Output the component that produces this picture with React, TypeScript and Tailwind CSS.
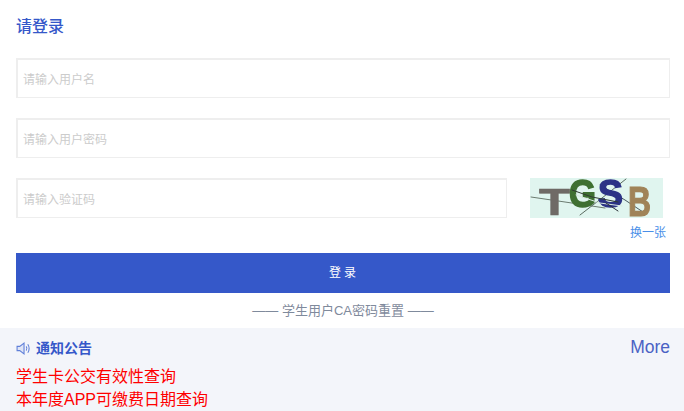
export default function App() {
  return (
    <div className="w-[684px] h-[411px] overflow-hidden bg-white flex flex-col font-['Liberation_Sans','Noto_Sans_CJK_SC',sans-serif]">
      <div className="pl-4 pr-[14px] flex flex-col">
        <div className="h-[58px] pt-[15px] text-[16px] leading-6 font-medium text-[#3558c9]">请登录</div>
        <div className="h-10 border border-[#eeeeee] border-t-2 border-l-2 pl-[5px] pt-[2px] flex items-center text-[12px] text-[#cccccc]">请输入用户名</div>
        <div className="mt-5 h-10 border border-[#eeeeee] border-t-2 border-l-2 pl-[5px] pt-[2px] flex items-center text-[12px] text-[#cccccc]">请输入用户密码</div>
        <div className="mt-5 flex h-10">
          <div className="w-[491px] border border-[#eeeeee] border-t-2 border-l-2 pl-[5px] pt-[2px] flex items-center text-[12px] text-[#cccccc]">请输入验证码</div>
          <div className="ml-[23px] w-[133px] h-10 bg-[#e0f5ef]">
            <svg width="133" height="40" viewBox="0 0 133 40" className="block overflow-visible blur-[0.6px]">
              <g strokeLinecap="round" fill="none">
                <path d="M1 19 L35 24 L75 30" stroke="#6b7b70" strokeWidth="1" />
                <path d="M50 37 L72 20 L96 1" stroke="#5a6b60" strokeWidth="1" />
                <path d="M70 7 L95 22 L116 36" stroke="#4a5a60" strokeWidth="1" />
              </g>
              <text x="9" y="37" fontFamily="Liberation Sans, sans-serif" fontWeight="700" fontSize="37" fill="#6f6a66" stroke="#6f6a66" strokeWidth="0.6" textLength="31" lengthAdjust="spacingAndGlyphs">T</text>
              <text x="39" y="29" fontFamily="Liberation Sans, sans-serif" fontWeight="700" fontSize="38" fill="#3f7032" stroke="#3f7032" strokeWidth="1.5" textLength="27" lengthAdjust="spacingAndGlyphs">G</text>
              <text x="68" y="29" fontFamily="Liberation Sans, sans-serif" fontWeight="700" fontSize="38" fill="#2c3386" stroke="#2c3386" strokeWidth="1.5" textLength="25" lengthAdjust="spacingAndGlyphs">S</text>
              <text x="98" y="38" fontFamily="Liberation Sans, sans-serif" fontWeight="700" fontSize="42" fill="#a08358" stroke="#a08358" strokeWidth="1.2" textLength="23" lengthAdjust="spacingAndGlyphs">B</text>
              <g fill="none" strokeLinecap="round">
                <path d="M42 12 L62 19 L88 24" stroke="#2f3a30" strokeWidth="1" />
                <path d="M46 17 L70 25 L92 28" stroke="#d8e8e0" strokeWidth="1" />
                <path d="M76 25 L88 33" stroke="#2a3038" strokeWidth="1" />
              </g>
            </svg>
          </div>
        </div>
        <div className="h-[35px] flex justify-end pr-1 pt-[7px] text-[12px] leading-4 text-[#4a8fe8]">换一张</div>
        <div className="h-10 bg-[#3558c9] flex items-center justify-center text-white text-[12px] tracking-[3px] pl-[2px]">登录</div>
        <div className="h-[35px] flex items-center justify-center text-[13px] text-[#7f8a9c]">—— 学生用户CA密码重置 ——</div>
      </div>
      <div className="flex-1 bg-[#f3f5fa] pl-4 pr-[14px]">
        <div className="h-[37px] flex items-center justify-between">
          <div className="flex items-center gap-[5px] text-[14px] font-bold text-[#3558c9] mt-[3px]">
            <svg width="15" height="15" viewBox="0 0 14 14" fill="none" stroke="#5f7fd8" strokeWidth="1">
              <path d="M1 5 H3.5 L7.5 2 V12 L3.5 9 H1 Z" fill="#dfe5f6" />
              <path d="M9.5 5 Q11 7 9.5 9" />
              <path d="M11 3 Q13.5 7 11 11" />
            </svg>
            <span>通知公告</span>
          </div>
          <span className="text-[17.5px] text-[#4a62c4] mt-[1px]">More</span>
        </div>
        <div className="text-[16px] leading-[23px] text-[#ff0000]">学生卡公交有效性查询</div>
        <div className="text-[16px] leading-[23px] text-[#ff0000]">本年度APP可缴费日期查询</div>
      </div>
    </div>
  );
}
